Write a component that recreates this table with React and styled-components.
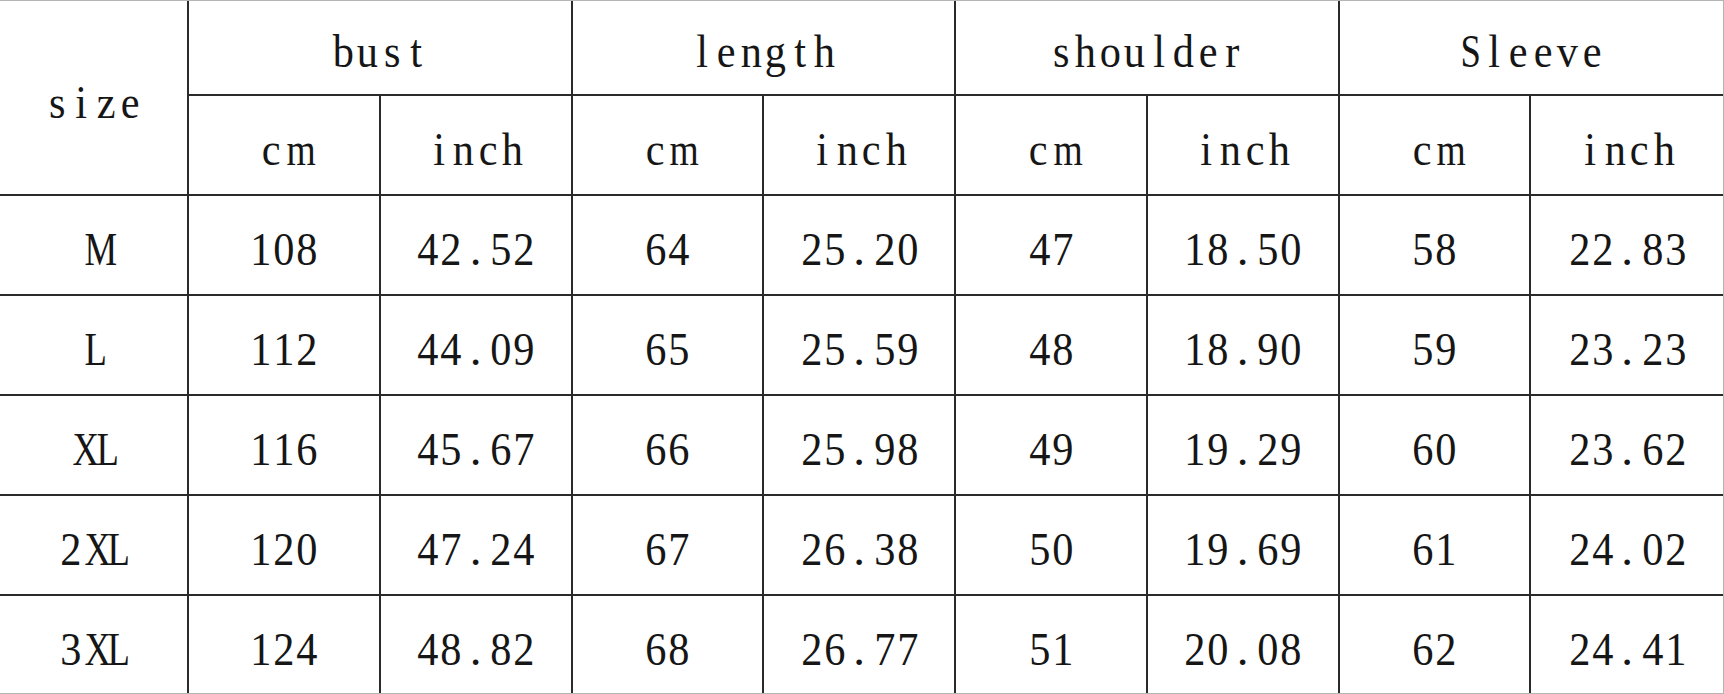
import React from 'react'
import styled, { createGlobalStyle } from 'styled-components'

const GlobalStyle = createGlobalStyle`
  html, body {
    margin: 0;
    padding: 0;
    background: #ffffff;
  }
`;

const Sheet = styled.div`
  box-sizing: border-box;
  width: 1724px;
  height: 694px;
  display: grid;
  grid-template-columns: 189px repeat(8, 1fr);
  grid-template-rows: 95px 100px repeat(4, 100px) 97px;
  border-top: 1px solid #b4b4b4;
  border-right: 1px solid #b4b4b4;
  border-bottom: 1px solid #b4b4b4;
  background: #ffffff;
  color: #161616;
  font-family: "Liberation Serif", "Times New Roman", serif;
  font-size: 47px;
  line-height: 1;
`;

const Cell = styled.div`
  box-sizing: border-box;
  display: flex;
  align-items: center;
  justify-content: center;
  padding-top: ${props => props.$lift || 9}px;
  border-right: ${props => props.$lastCol ? 'none' : '2px solid #2a2a2a'};
  border-bottom: ${props => props.$lastRow ? 'none' : '2px solid #2a2a2a'};
  grid-column: ${props => props.$cols ? `span ${props.$cols}` : 'auto'};
  grid-row: ${props => props.$rows ? `span ${props.$rows}` : 'auto'};
  white-space: nowrap;
`;

// fixed-width slot per character, like the half-width CJK latin of the original
const Char = styled.span`
  display: inline-block;
  width: ${props => props.$w}px;
  text-align: center;
  transform: scaleX(${props => props.$sx});
`;

const slot = ch => {
  if (ch === '.') return { w: 27, sx: 1 };
  if (/[0-9]/.test(ch)) return { w: 23, sx: 0.9 };
  if (ch === 'm' || ch === 'w') return { w: 24.5, sx: 0.8 };
  if (/[a-z]/.test(ch)) return { w: 24.5, sx: 0.9 };
  return { w: 23.5, sx: 0.78 };
};

const Text = ({ children }) => (
  <span>
    {String(children).split('').map((ch, i) => {
      const s = slot(ch);
      return <Char key={i} $w={s.w} $sx={s.sx}>{ch}</Char>;
    })}
  </span>
);

const groups = ['bust', 'length', 'shoulder', 'Sleeve'];

const rows = [
  ['M', '108', '42.52', '64', '25.20', '47', '18.50', '58', '22.83'],
  ['L', '112', '44.09', '65', '25.59', '48', '18.90', '59', '23.23'],
  ['XL', '116', '45.67', '66', '25.98', '49', '19.29', '60', '23.62'],
  ['2XL', '120', '47.24', '67', '26.38', '50', '19.69', '61', '24.02'],
  ['3XL', '124', '48.82', '68', '26.77', '51', '20.08', '62', '24.41'],
];

const App = () => {
  return (
    <>
      <GlobalStyle />
      <Sheet>
        <Cell $rows={2} $lift={10}><Text>size</Text></Cell>
        {groups.map((g, i) => (
          <Cell key={g} $cols={2} $lift={8} $lastCol={i === groups.length - 1}>
            <Text>{g}</Text>
          </Cell>
        ))}
        {groups.map((g, i) => (
          <React.Fragment key={g}>
            <Cell $lift={8}><Text>cm</Text></Cell>
            <Cell $lift={8} $lastCol={i === groups.length - 1}><Text>inch</Text></Cell>
          </React.Fragment>
        ))}
        {rows.map((row, r) => row.map((val, c) => (
          <Cell
            key={`${r}-${c}`}
            $lastCol={c === row.length - 1}
            $lastRow={r === rows.length - 1}
          >
            <Text>{val}</Text>
          </Cell>
        )))}
      </Sheet>
    </>
  );
}

export default App;
